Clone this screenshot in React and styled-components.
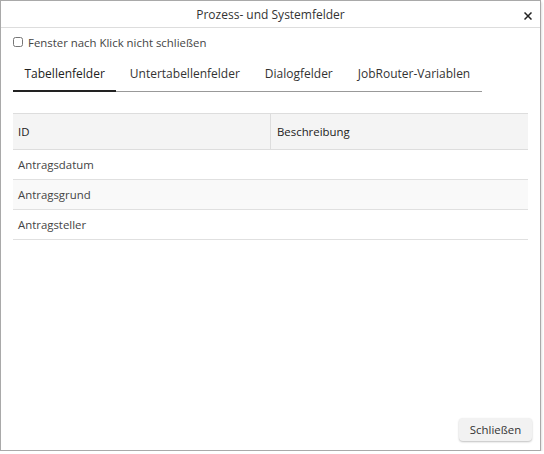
import React, { useState } from "react";
import styled, { createGlobalStyle } from "styled-components";

const GlobalStyle = createGlobalStyle`
	html, body {
		margin: 0;
		padding: 0;
		background: #fff;
		font-family: "Open Sans", "Liberation Sans", sans-serif;
		color: #333;
	}
`;

const tabs = ["Tabellenfelder", "Untertabellenfelder", "Dialogfelder", "JobRouter-Variablen"];
const rows = ["Antragsdatum", "Antragsgrund", "Antragsteller"];

export default function App() {
	const [active, setActive] = useState(0);
	const [keepOpen, setKeepOpen] = useState(false);

	return (
		<>
			<GlobalStyle />
			<Dialog>
				<Header>
					<Title>Prozess- und Systemfelder</Title>
					<Close aria-label="close">
						<svg width="8" height="8" viewBox="0 0 8 8">
							<path d="M0.5 0.5L7.5 7.5M7.5 0.5L0.5 7.5" stroke="#222" strokeWidth="1.5" />
						</svg>
					</Close>
				</Header>
				<Body>
					<CheckRow>
						<Check
							type="checkbox"
							checked={keepOpen}
							onChange={(e) => setKeepOpen(e.target.checked)}
						/>
						Fenster nach Klick nicht schließen
					</CheckRow>
					<TabBar>
						{tabs.map((t, i) => (
							<Tab key={t} active={i === active ? 1 : 0} onClick={() => setActive(i)}>
								{t}
							</Tab>
						))}
					</TabBar>
					<Table>
						<thead>
							<tr>
								<Th>ID</Th>
								<Th>Beschreibung</Th>
							</tr>
						</thead>
						<tbody>
							{rows.map((r, i) => (
								<Tr key={r} odd={i % 2}>
									<Td>{r}</Td>
									<Td></Td>
								</Tr>
							))}
						</tbody>
					</Table>
				</Body>
				<Footer>
					<Button>Schließen</Button>
				</Footer>
			</Dialog>
		</>
	);
}

const Dialog = styled.div`
	width: 539px;
	height: 449px;
	border: 1px solid #a9a9a9;
	background: #fff;
	display: flex;
	flex-direction: column;
	box-shadow: 1px 2px 2px rgba(0, 0, 0, 0.12);
`;

const Header = styled.div`
	position: relative;
	height: 26px;
	border-bottom: 1px solid #ddd;
	display: flex;
	align-items: center;
	justify-content: center;
`;

const Title = styled.div`
	font-size: 12px;
	color: #333;
`;

const Close = styled.button`
	position: absolute;
	right: 8px;
	top: 11px;
	width: 8px;
	height: 8px;
	padding: 0;
	border: 0;
	background: none;
	display: flex;
	cursor: pointer;
`;

const Body = styled.div`
	flex: 1;
	padding: 0 12px;
`;

const CheckRow = styled.label`
	display: flex;
	align-items: center;
	gap: 5px;
	height: 29px;
	font-size: 11.4px;
	color: #444;
`;

const Check = styled.input`
	margin: 0 0 1px;
	width: 10px;
	height: 10px;
	accent-color: #888;
`;

const TabBar = styled.div`
	display: flex;
	width: fit-content;
	border-bottom: 1px solid #999;
	margin-bottom: 21px;
`;

const Tab = styled.div`
	font-size: 12px;
	line-height: 16px;
	white-space: nowrap;
	padding: 9px 11.5px 8px;
	margin-bottom: -1px;
	margin-right: 2px;
	cursor: pointer;
	color: ${({ active }) => (active ? "#222" : "#333")};
	border-bottom: 2px solid ${({ active }) => (active ? "#222" : "transparent")};

	&:last-child {
		margin-right: 0;
	}
`;

const Table = styled.table`
	width: 100%;
	border-collapse: collapse;
	font-size: 11.4px;
`;

const Th = styled.th`
	text-align: left;
	font-weight: normal;
	background: #f4f4f4;
	height: 35px;
	padding: 0 5px;
	border-top: 1px solid #ddd;
	border-bottom: 1px solid #ddd;
	color: #222;
	width: 50%;

	& + & {
		border-left: 1px solid #ddd;
		padding-left: 6px;
	}
`;

const Tr = styled.tr`
	background: ${({ odd }) => (odd ? "#f9f9f9" : "#fff")};
	border-bottom: 1px solid #e0e0e0;
`;

const Td = styled.td`
	height: 29px;
	padding: 0 5px;
	color: #444;
`;

const Footer = styled.div`
	display: flex;
	justify-content: flex-end;
	padding: 0 8px 9px;
`;

const Button = styled.button`
	font-family: inherit;
	font-size: 11.4px;
	color: #333;
	background: #f2f2f2;
	border: 0;
	border-radius: 4px;
	height: 23px;
	width: 73px;
	padding: 0;
	box-shadow: 0 1px 2px rgba(0, 0, 0, 0.25);
	cursor: pointer;
`;
